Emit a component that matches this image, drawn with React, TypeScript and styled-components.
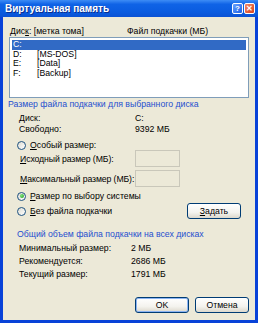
import React from "react";
import styled, { createGlobalStyle } from "styled-components";

const GlobalStyle = createGlobalStyle`
  html, body {
    margin: 0;
    padding: 0;
    background: #ffffff;
  }
  body {
    font-family: "Liberation Sans", Arial, sans-serif;
    font-size: 8.7px;
    color: #000000;
    white-space: nowrap;
  }
`;

const Window = styled.div`
  width: 258px;
  height: 323px;
  display: flex;
  flex-direction: column;
  background: #0842d8;
`;

const TitleBar = styled.div`
  height: 17px;
  flex: none;
  display: flex;
  align-items: center;
  padding: 0 3px 0 5px;
  background: linear-gradient(
    to bottom,
    #3d8cf5 0%,
    #0f63e6 25%,
    #0a5ce0 70%,
    #0a52d4 100%
  );
`;

const Title = styled.div`
  flex: 1;
  color: #ffffff;
  font-weight: bold;
  font-size: 10px;
  text-shadow: 1px 1px 0 #0a2f8f;
`;

const CaptionButton = styled.div<{ $variant: "help" | "close" }>`
  width: 11px;
  height: 11px;
  margin-left: 1px;
  box-sizing: border-box;
  border: 1px solid #ffffff;
  border-radius: 2px;
  display: flex;
  align-items: center;
  justify-content: center;
  color: #ffffff;
  font-size: 8px;
  font-weight: bold;
  line-height: 1;
  background: ${({ $variant }) =>
    $variant === "close"
      ? "linear-gradient(135deg, #f08a6a, #d8401c)"
      : "linear-gradient(135deg, #6aa2ff, #1a5fe6)"};
`;

const Frame = styled.div`
  flex: 1;
  display: flex;
  padding: 0 3px 3px 3px;
`;

const Body = styled.div`
  flex: 1;
  background: #ece9d8;
  padding: 9px 6px 0 5px;
  display: flex;
  flex-direction: column;
`;

const HeaderRow = styled.div`
  display: flex;
  height: 10px;
  line-height: 10px;
  padding-left: 2px;
`;

const HeaderCol = styled.div<{ $width?: number }>`
  width: ${({ $width }) => ($width ? `${$width}px` : "auto")};
`;

const ListBox = styled.div`
  margin: 1px 0 0 1px;
  height: 61px;
  box-sizing: border-box;
  border: 1px solid #7f9db9;
  background: #ffffff;
  padding: 2px;
`;

const ListRow = styled.div<{ $selected?: boolean }>`
  display: flex;
  height: 9.5px;
  line-height: 9.5px;
  padding-left: 1px;
  background: ${({ $selected }) => ($selected ? "#316ac5" : "transparent")};
  color: ${({ $selected }) => ($selected ? "#ffffff" : "#000000")};
`;

const DriveCol = styled.div`
  width: 24px;
`;

const SectionLabel = styled.div<{ $indent: number; $top: number }>`
  color: #1f4fcf;
  height: 10px;
  line-height: 10px;
  margin-top: ${({ $top }) => $top}px;
  padding-left: ${({ $indent }) => $indent}px;
`;

const InfoRow = styled.div<{ $height: number; $labelWidth: number }>`
  display: flex;
  height: ${({ $height }) => $height}px;
  line-height: ${({ $height }) => $height}px;
  padding-left: 11px;

  & > span:first-child {
    width: ${({ $labelWidth }) => $labelWidth}px;
  }
`;

const InfoGroup = styled.div<{ $top: number }>`
  margin-top: ${({ $top }) => $top}px;
`;

const RadioRow = styled.div<{ $top: number; $height: number }>`
  display: flex;
  align-items: center;
  height: ${({ $height }) => $height}px;
  margin-top: ${({ $top }) => $top}px;
  padding-left: 9px;
`;

const RadioCircle = styled.span<{ $checked?: boolean }>`
  width: 9px;
  height: 9px;
  box-sizing: border-box;
  border-radius: 50%;
  border: 1px solid #1c5180;
  background: linear-gradient(135deg, #dcdbd2, #ffffff);
  display: flex;
  align-items: center;
  justify-content: center;
  margin-right: 4px;

  &::after {
    content: "";
    display: ${({ $checked }) => ($checked ? "block" : "none")};
    width: 4px;
    height: 4px;
    border-radius: 50%;
    background: radial-gradient(circle at 35% 35%, #7be27b, #1f9c1f);
  }
`;

const FieldRow = styled.div<{ $top: number }>`
  display: flex;
  align-items: center;
  height: 17px;
  margin-top: ${({ $top }) => $top}px;
  padding-left: 12px;
`;

const FieldLabel = styled.span`
  width: 115px;
  letter-spacing: -0.1px;
`;

const TextBox = styled.div`
  width: 45px;
  height: 17px;
  box-sizing: border-box;
  border: 1px solid #c9c7ba;
  background: #ece9d8;
`;

const Button = styled.div<{ $default?: boolean }>`
  width: 54px;
  height: 16px;
  box-sizing: border-box;
  border: 1px solid #003c74;
  border-radius: 3px;
  display: flex;
  align-items: center;
  justify-content: center;
  background: linear-gradient(to bottom, #ffffff 0%, #f4f3ee 60%, #dcd8cc 100%);
  box-shadow: ${({ $default }) =>
    $default ? "inset 0 0 0 1px #8cb4f2" : "none"};
`;

const PushButton = styled(Button)`
  margin-left: auto;
  margin-right: 8px;
`;

const ButtonRow = styled.div`
  display: flex;
  justify-content: flex-end;
  gap: 6px;
  margin-top: 16px;
`;

const Key = styled.span`
  text-decoration: underline;
`;

const drives = [
  { letter: "C:", label: "", selected: true },
  { letter: "D:", label: "[MS-DOS]" },
  { letter: "E:", label: "[Data]" },
  { letter: "F:", label: "[Backup]" },
];

const App: React.FC = () => {
  return (
    <>
      <GlobalStyle />
      <Window>
        <TitleBar>
          <Title>Виртуальная память</Title>
          <CaptionButton $variant="help">?</CaptionButton>
          <CaptionButton $variant="close">✕</CaptionButton>
        </TitleBar>
        <Frame>
          <Body>
            <HeaderRow>
              <HeaderCol $width={117}>
                Дис<Key>к</Key>: [метка тома]
              </HeaderCol>
              <HeaderCol>Файл подкачки (МБ)</HeaderCol>
            </HeaderRow>
            <ListBox>
              {drives.map((d) => (
                <ListRow key={d.letter} $selected={d.selected}>
                  <DriveCol>{d.letter}</DriveCol>
                  <span>{d.label}</span>
                </ListRow>
              ))}
            </ListBox>

            <SectionLabel $indent={0} $top={1}>
              Размер файла подкачки для выбранного диска
            </SectionLabel>
            <InfoGroup $top={4}>
              <InfoRow $height={11} $labelWidth={116}>
                <span>Диск:</span>
                <span>C:</span>
              </InfoRow>
              <InfoRow $height={11} $labelWidth={116}>
                <span>Свободно:</span>
                <span>9392 МБ</span>
              </InfoRow>
            </InfoGroup>

            <RadioRow $top={5} $height={10}>
              <RadioCircle />
              <span>
                <Key>О</Key>собый размер:
              </span>
            </RadioRow>
            <FieldRow $top={0}>
              <FieldLabel>
                <Key>И</Key>сходный размер (МБ):
              </FieldLabel>
              <TextBox />
            </FieldRow>
            <FieldRow $top={3}>
              <FieldLabel>
                <Key>М</Key>аксимальный размер (МБ):
              </FieldLabel>
              <TextBox />
            </FieldRow>
            <RadioRow $top={4} $height={10}>
              <RadioCircle $checked />
              <span>
                <Key>Р</Key>азмер по выбору системы
              </span>
            </RadioRow>
            <RadioRow $top={2} $height={16}>
              <RadioCircle />
              <span>
                <Key>Б</Key>ез файла подкачки
              </span>
              <PushButton>
                <span>
                  <Key>З</Key>адать
                </span>
              </PushButton>
            </RadioRow>

            <SectionLabel $indent={9} $top={10}>
              Общий объем файла подкачки на всех дисках
            </SectionLabel>
            <InfoGroup $top={3}>
              <InfoRow $height={13} $labelWidth={112}>
                <span>Минимальный размер:</span>
                <span>2 МБ</span>
              </InfoRow>
              <InfoRow $height={13} $labelWidth={112}>
                <span>Рекомендуется:</span>
                <span>2686 МБ</span>
              </InfoRow>
              <InfoRow $height={13} $labelWidth={112}>
                <span>Текущий размер:</span>
                <span>1791 МБ</span>
              </InfoRow>
            </InfoGroup>

            <ButtonRow>
              <Button $default>OK</Button>
              <Button>Отмена</Button>
            </ButtonRow>
          </Body>
        </Frame>
      </Window>
    </>
  );
};

export default App;
